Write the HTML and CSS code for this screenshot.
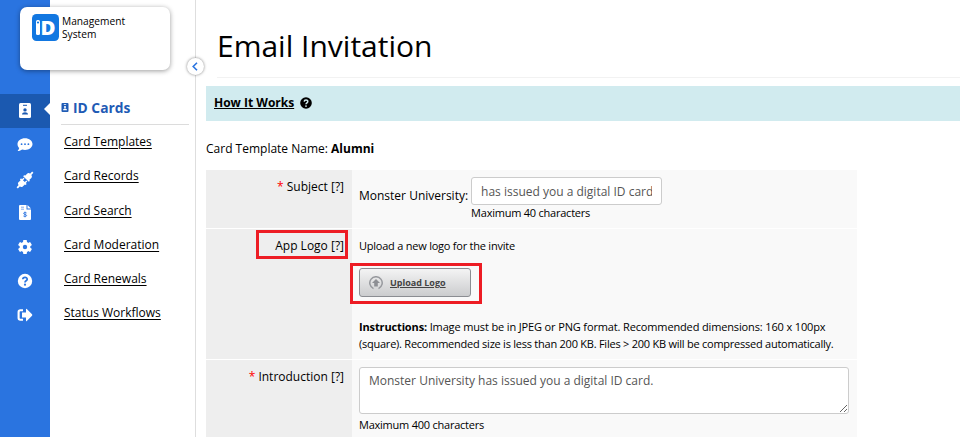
FILE: index.html
```html
<!DOCTYPE html>
<html lang="en">
<head>
  <meta charset="UTF-8">
  <title>Email Invitation</title>
  <link rel="stylesheet" href="styles.css">
</head>
<body>

  <div class="page">
    <nav class="rail">
      <a class="rail-item active">
        <svg width="12" height="15" viewBox="0 0 12 15"><rect width="12" height="15" rx="1.5" fill="#fff"/><rect x="4" y="1.8" width="4" height="1" fill="#1b59b0"/><circle cx="6" cy="6.9" r="1.7" fill="#1b59b0"/><path d="M3 11.5c0-3 6-3 6 0z" fill="#1b59b0"/></svg>
      </a>
      <a class="rail-item">
        <svg width="16" height="14" viewBox="0 0 16 14"><path d="M8 .2c4.200 0 7.500 2.600 7.500 5.900S12.200 12 8 12c-1 0-2-.2-2.900-.5-1 .8-2.400 1.500-4.500 1.500.8-.9 1.400-1.900 1.600-2.900C1.200 9.100.5 7.800.5 6.100.5 2.800 3.800.2 8 .2z" fill="#fff"/><circle cx="4.600" cy="6.200" r=".9" fill="#2a74e0"/><circle cx="8" cy="6.200" r=".9" fill="#2a74e0"/><circle cx="11.400" cy="6.200" r=".9" fill="#2a74e0"/></svg>
      </a>
      <a class="rail-item plug">
        <svg width="18" height="18" viewBox="0 0 18 18"><g transform="rotate(45 9 9)" fill="#fff"><rect x="8.100" y="-2" width="1.800" height="4"/><path d="M6 3q0-2 3-2t3 2v3h1v1.600H5V6h1z"/><path d="M6.300 8.400h1.400v2.200h2.600V8.400h1.400v2.200H13v1.600h-1v3q0 2-3 2t-3-2v-3H5v-1.600h1.300z"/><rect x="8.100" y="16" width="1.800" height="4"/></g></svg>
      </a>
      <a class="rail-item">
        <svg width="12" height="15" viewBox="0 0 12 15"><path d="M1 0h6.500v4.500H12V14q0 1-1 1H1q-1 0-1-1V1q0-1 1-1z" fill="#fff"/><path d="M8.500 0 12 3.500H8.500z" fill="#fff"/><path d="M2 2.200h3M2 4.200h3" stroke="#2a74e0" stroke-width=".6"/><path d="M7.600 8C6.500 7.200 4.500 7.400 4.600 8.500c.1 1.200 3 .8 3 2 0 1.100-2.200 1.200-3.200.5M6 6.600v5.700" stroke="#2a74e0" stroke-width=".9" fill="none"/></svg>
      </a>
      <a class="rail-item">
        <svg width="16" height="16" viewBox="0 0 16 16"><g fill="#fff"><circle cx="8" cy="8" r="5.400"/><rect x="6.100" y="1" width="3.800" height="14" rx=".7"/><rect x="6.100" y="1" width="3.800" height="14" rx=".7" transform="rotate(60 8 8)"/><rect x="6.100" y="1" width="3.800" height="14" rx=".7" transform="rotate(120 8 8)"/></g><circle cx="8" cy="8" r="2.200" fill="#2a74e0"/></svg>
      </a>
      <a class="rail-item">
        <svg width="16" height="16" viewBox="0 0 16 16"><circle cx="8" cy="8" r="7.200" fill="#fff"/><path d="M5.800 6.300c.1-2.600 4.500-2.500 4.400 0C10.200 7.900 8 7.700 8 9.400" stroke="#2a74e0" stroke-width="1.700" fill="none"/><circle cx="8" cy="11.700" r="1.100" fill="#2a74e0"/></svg>
      </a>
      <a class="rail-item">
        <svg width="16" height="14" viewBox="0 0 16 14"><path d="M6 2.200H3.300q-1.700 0-1.700 1.700v6.200q0 1.700 1.700 1.700H6" stroke="#fff" stroke-width="2.100" fill="none"/><path d="M5 4.500h4V1.300q0-1 .8-.3L15 6.300q.7.700 0 1.400L9.800 13q-.8.700-.8-.3V9.500H5z" fill="#fff"/></svg>
      </a>
    </nav>

    <aside class="sidebar">
      <h2 class="sidebar-title">
        <svg width="8" height="9" viewBox="0 0 8 9"><rect x=".5" width="7" height="9" rx="1" fill="#1f5bb5"/><path d="M2.800 1.500h2.400" stroke="#fff" stroke-width=".8"/><circle cx="4" cy="4" r="1.100" fill="#fff"/><path d="M2 7.300c0-2.400 4-2.400 4 0z" fill="#fff"/></svg>
        ID Cards
      </h2>
      <ul class="menu">
        <li><a>Card Templates</a></li>
        <li><a>Card Records</a></li>
        <li><a>Card Search</a></li>
        <li><a>Card Moderation</a></li>
        <li><a>Card Renewals</a></li>
        <li><a>Status Workflows</a></li>
      </ul>
    </aside>

    <main class="content">
      <h1>Email Invitation</h1>
      <div class="how-bar">
        <a>How It Works</a>
        <svg width="12" height="12" viewBox="0 0 12 12"><circle cx="6" cy="6" r="5.800" fill="#000"/><path d="M4.200 4.600c.1-2.200 3.700-2 3.600 0C7.800 5.900 6 5.800 6 7.300" stroke="#d1ebef" stroke-width="1.500" fill="none"/><circle cx="6" cy="9.100" r=".9" fill="#d1ebef"/></svg>
      </div>
      <p class="template-name">Card Template Name: <b>Alumni</b></p>

      <div class="form">
        <div class="row row-subject">
          <div class="label"><span class="req">*</span> Subject [?]</div>
          <div class="value subject">
            <span class="prefix">Monster University:</span>
            <div>
              <div class="input"><span>has issued you a digital ID card</span></div>
              <div class="hint">Maximum 40 characters</div>
            </div>
          </div>
        </div>
        <div class="row row-logo">
          <div class="label">App Logo [?]<span class="mark mark-label"></span></div>
          <div class="value">
            <div class="small">Upload a new logo for the invite</div>
            <a class="upload">
              <svg width="14" height="14" viewBox="0 0 14 14"><path d="M4.500 12.600A6.200 6.200 0 1 1 9.500 12.600" stroke="#97999e" stroke-width="1.500" fill="none"/><path d="M7 3 11 7H8.800v3.500H5.200V7H3z" fill="#8d8f94"/></svg>
              <span>Upload Logo</span>
              <i class="mark mark-upload"></i>
            </a>
            <div class="small instructions"><b>Instructions:</b> Image must be in JPEG or PNG format. Recommended dimensions: 160 x 100px<br><span class="tight">(square). Recommended size is less than 200 KB. Files &gt; 200 KB will be compressed automatically.</span></div>
          </div>
        </div>
        <div class="row row-intro">
          <div class="label"><span class="req">*</span> Introduction [?]</div>
          <div class="value">
            <textarea class="intro">Monster University has issued you a digital ID card.</textarea>
            <div class="hint">Maximum 400 characters</div>
          </div>
        </div>
      </div>
    </main>

    <div class="brand">
      <svg width="27" height="27" viewBox="0 0 27 27"><rect width="27" height="27" rx="4.500" fill="#1277e1"/><rect x="4" y="6" width="4" height="15" rx="1.500" fill="#fff"/><circle cx="6" cy="8.500" r="1.100" fill="#1277e1"/><text x="8.500" y="21" class="brand-d" textLength="15" lengthAdjust="spacingAndGlyphs">D</text></svg>
      <span>Management<br>System</span>
    </div>
    <a class="collapse">
      <svg width="6" height="9" viewBox="0 0 6 9"><path d="M5 .7 1.200 4.500 5 8.300" stroke="#2a74e0" stroke-width="1.600" fill="none"/></svg>
    </a>
  </div>

</body>
</html>
```
FILE: styles.css
```css
* {
  box-sizing: border-box;
}

body {
  margin: 0;
  font-family: "Open Sans", sans-serif;
  font-size: 12px;
  color: #000;
  background: #fff;
  overflow: hidden;
}

.page {
  position: relative;
  display: flex;
  height: 437px;
  overflow: hidden;
}

.rail {
  width: 50px;
  padding-top: 94px;
  background: #2a74e0;
}

.rail-item {
  position: relative;
  display: flex;
  align-items: center;
  justify-content: center;
  height: 34px;
  padding-bottom: 1px;
}

.rail-item.plug {
  padding: 2px 0 0;
}

.rail-item.active {
  background: #1b59b0;
}

.rail-item.active::after {
  content: "";
  position: absolute;
  right: 0;
  top: 9px;
  border: 6px solid transparent;
  border-left: 0;
  border-right-color: #fff;
}

.sidebar {
  width: 146px;
  padding: 98px 6px 0 11px;
  border-right: 1px solid #dedede;
}

.sidebar-title {
  display: flex;
  align-items: center;
  gap: 4px;
  height: 27px;
  margin: 0;
  padding-bottom: 7px;
  border-bottom: 1px solid #dcdcdc;
  font-size: 13.800px;
  color: #1f5bb5;
}

.menu {
  margin: 0;
  padding: 0 0 0 3px;
  list-style: none;
}

.menu li {
  height: 34.300px;
  line-height: 34px;
  font-size: 12px;
}

.menu a {
  text-decoration: underline;
  text-underline-offset: 1.500px;
}

.content {
  flex: 1;
  padding-left: 10px;
}

h1 {
  height: 78px;
  margin: 0 0 8px 11px;
  padding-top: 26px;
  border-bottom: 1px solid #f2f2f2;
  font-size: 30px;
  font-weight: 400;
  line-height: 40px;
}

.how-bar {
  display: flex;
  align-items: center;
  gap: 6px;
  height: 35px;
  padding: 0 0 2px 8px;
  background: #d1ebef;
  font-weight: 700;
}

.how-bar a {
  text-decoration: underline;
}

.template-name {
  margin: 0;
  padding-top: 18px;
  height: 49px;
  line-height: 20px;
}

.form {
  width: 651px;
}

.row {
  display: flex;
  margin-bottom: 1px;
}

.label {
  position: relative;
  width: 146px;
  padding: 8px 8px 0 0;
  background: #eee;
  line-height: 18px;
  text-align: right;
}

.req {
  color: #f00;
}

.value {
  flex: 1;
  padding: 7px 8px 0 7px;
  background: #f9f9f9;
}

.row-subject {
  height: 58px;
}

.row-logo {
  height: 130px;
}

.row-intro {
  height: 90px;
}

.row-logo .value {
  padding-top: 8px;
}

.subject {
  display: flex;
  gap: 3px;
}

.prefix {
  padding-top: 10px;
  line-height: 18px;
}

.input {
  width: 191px;
  height: 28px;
  padding: 0 9px;
  border: 1px solid #ccc;
  border-radius: 3px;
  background: #fff;
  color: #555;
  line-height: 27px;
  white-space: nowrap;
}

.input span {
  display: block;
  overflow: hidden;
}

.hint,
.small {
  font-size: 11px;
  line-height: 17px;
  letter-spacing: -0.230px;
}

.subject .hint {
  line-height: 16px;
}

.row-intro .hint {
  padding-top: 2px;
}

.upload {
  position: relative;
  display: flex;
  align-items: center;
  gap: 7px;
  width: 112px;
  height: 29px;
  margin-top: 14px;
  padding-left: 9px;
  border: 1px solid #8b8d92;
  border-radius: 3px;
  background: linear-gradient(#f4f4f4, #cbccce);
  color: #444;
  font-size: 9px;
  font-weight: 700;
  text-decoration: underline;
}

.small.instructions {
  margin-top: 21px;
  letter-spacing: -0.140px;
  white-space: nowrap;
}

.tight {
  letter-spacing: -0.240px;
}

.intro {
  display: block;
  width: 490px;
  height: 47px;
  padding: 4px 9px;
  border: 1px solid #ccc;
  border-radius: 3px;
  font: 12px/18px "Open Sans", sans-serif;
  color: #555;
}

/* red callouts around the logo field */
.mark {
  position: absolute;
  border: 3px solid #ed1c24;
}

.mark-label {
  top: 1px;
  right: 4px;
  width: 92px;
  height: 29px;
}

.mark-upload {
  top: -6px;
  left: -10px;
  width: 132px;
  height: 41px;
}

.brand {
  position: absolute;
  left: 20px;
  top: 7px;
  display: flex;
  gap: 3px;
  width: 150px;
  height: 63px;
  padding: 7px 12px;
  border-radius: 7px;
  background: #fff;
  box-shadow: 0 1px 5px rgba(0, 0, 0, 0.4);
  font-size: 10.200px;
  line-height: 12.500px;
}

.brand span {
  padding-top: 1px;
}

.brand-d {
  font: 800 20px "Open Sans", sans-serif;
  fill: #fff;
}

.collapse {
  position: absolute;
  left: 187px;
  top: 58px;
  display: flex;
  align-items: center;
  justify-content: center;
  width: 17px;
  height: 17px;
  padding-right: 2px;
  border-radius: 50%;
  background: #fff;
  box-shadow: 0 0 3px rgba(0, 0, 0, 0.5);
}
```
